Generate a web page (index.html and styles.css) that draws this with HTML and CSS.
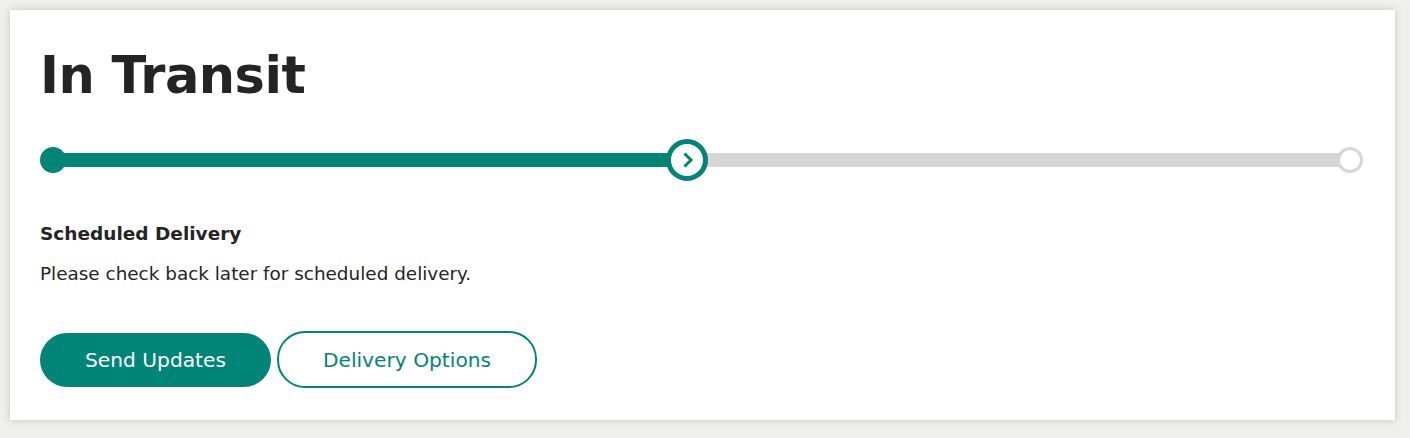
FILE: index.html
```html
<!DOCTYPE html>
<html>
<head>
<meta charset="utf-8">
<link rel="stylesheet" href="styles.css">
</head>
<body>
<div class="card">
  <h1 class="title">In Transit</h1>
  <div class="progress">
    <div class="track">
      <div class="fill"></div>
    </div>
    <span class="dot start"></span>
    <span class="dot current">
      <svg width="14" height="18" viewBox="0 0 14 18"><path d="M3.5 2.5 L10 9 L3.5 15.5" fill="none" stroke="#008577" stroke-width="3"/></svg>
    </span>
    <span class="dot end"></span>
  </div>
  <h2 class="subtitle">Scheduled Delivery</h2>
  <p class="desc">Please check back later for scheduled delivery.</p>
  <div class="actions">
    <button class="btn primary">Send Updates</button>
    <button class="btn secondary">Delivery Options</button>
  </div>
</div>
</body>
</html>
```
FILE: styles.css
```css
html, body {
  margin: 0;
  padding: 0;
  background: #efefee;
}
body {
  padding: 10px 15px 18px 10px;
  font-family: "DejaVu Sans", Verdana, sans-serif;
  color: #242424;
}
.card {
  background: #fff;
  box-shadow: 0 0 8px rgba(0,0,0,0.18);
  padding: 36px 30px 31px 30px;
  height: 410px;
  box-sizing: border-box;
}
.title {
  margin: 0;
  font-size: 51px;
  font-weight: bold;
  line-height: 60px;
  letter-spacing: -0.5px;
}
.progress {
  position: relative;
  height: 42px;
  margin-top: 33px;
  margin-right: 2px;
}
.track {
  position: absolute;
  left: 12px;
  right: 12px;
  top: 14px;
  height: 14px;
  background: #d6d6d6;
}
.fill {
  width: 633px;
  height: 100%;
  background: #008577;
}
.dot {
  position: absolute;
  box-sizing: border-box;
  border-radius: 50%;
}
.dot.start {
  left: 0;
  top: 8px;
  width: 26px;
  height: 26px;
  background: #008577;
}
.dot.current {
  left: 626px;
  top: 0;
  width: 42px;
  height: 42px;
  background: #fff;
  border: 5px solid #008577;
  display: flex;
  align-items: center;
  justify-content: center;
}
.dot.current svg {
  margin-left: 2px;
}
.dot.end {
  right: 0;
  top: 8px;
  width: 26px;
  height: 26px;
  background: #fff;
  border: 3px solid #d6d6d6;
}
.subtitle {
  margin: 42px 0 0 0;
  font-size: 18.5px;
  font-weight: bold;
  line-height: 22px;
}
.desc {
  margin: 18px 0 0 0;
  font-size: 18.4px;
  line-height: 22px;
}
.actions {
  display: flex;
  align-items: center;
  gap: 6px;
  margin-top: 46px;
}
.btn {
  font-family: "DejaVu Sans", Verdana, sans-serif;
  font-size: 20.2px;
  border-radius: 28px;
  cursor: pointer;
}
.btn.primary {
  width: 231px;
  height: 54px;
  background: #008577;
  color: #fff;
  border: none;
}
.btn.secondary {
  width: 260px;
  height: 57px;
  background: #fff;
  color: #008577;
  border: 2px solid #008577;
}
```
